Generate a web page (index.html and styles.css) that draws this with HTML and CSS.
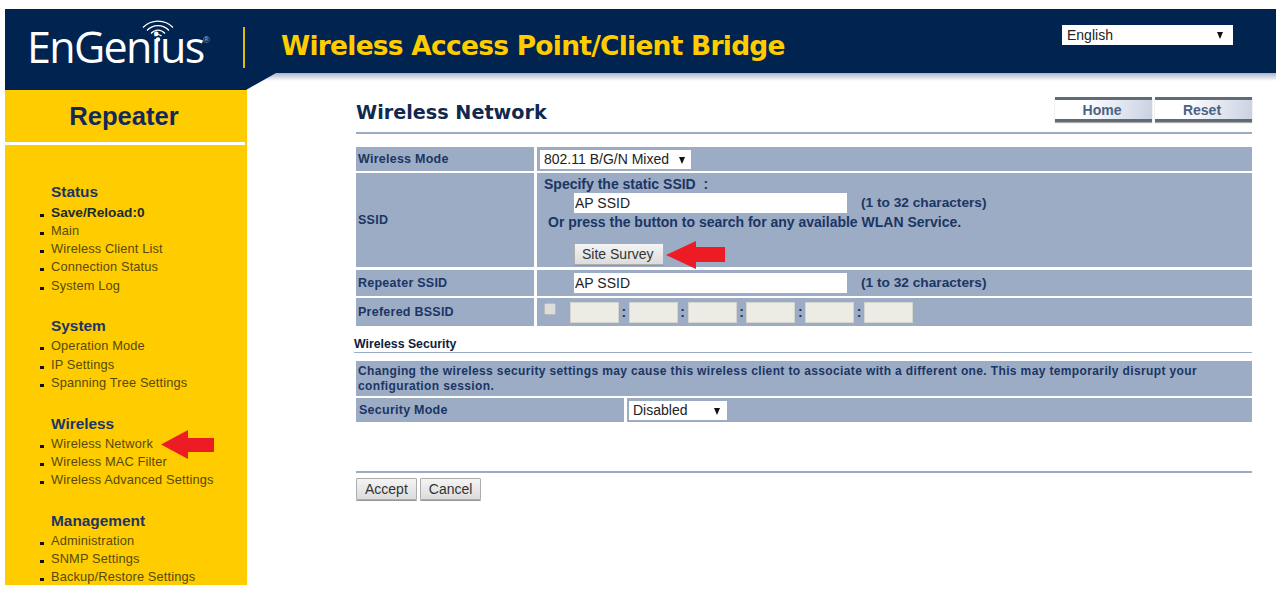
FILE: index.html
```html
<!DOCTYPE html>
<html>
<head>
<meta charset="utf-8">
<title>Wireless Network</title>
<link rel="stylesheet" href="styles.css">
</head>
<body>

<div id="header">
    <div class="logo">
        <span class="logo-text">EnGenius</span><span class="logo-reg">&reg;</span>
        <svg class="logo-wifi" width="34" height="24" viewBox="0 0 34 24" fill="none" stroke="#fff">
            <path d="M2 9.5C10 1 24 1 32 9.5" stroke-width="1.2"/>
            <path d="M6 12.5C12 6 22 6 28 12.5" stroke-width="1.2"/>
            <path d="M10 15.5C14 11 20 11 24 15.5" stroke-width="1.2"/>
            <path d="M13.5 18C15.5 16 18.5 16 20.5 18" stroke-width="1.2"/>
            <circle cx="17" cy="21.5" r="2.2" fill="#fff" stroke="none"/>
        </svg>
    </div>
    <div class="logo-divider"></div>
    <div class="product-name">Wireless Access Point/Client Bridge</div>
    <div class="select-wrap lang-select">
        <select><option>English</option></select>
    </div>
</div>

<div id="body-row">
    <div id="sidebar">
        <div class="notch"></div>
        <div class="mode-title">Repeater</div>
        <div class="menu">
            <div class="menu-group">
                <h3>Status</h3>
                <ul>
                    <li class="save">Save/Reload:0</li>
                    <li>Main</li>
                    <li>Wireless Client List</li>
                    <li>Connection Status</li>
                    <li>System Log</li>
                </ul>
            </div>
            <div class="menu-group">
                <h3>System</h3>
                <ul>
                    <li>Operation Mode</li>
                    <li>IP Settings</li>
                    <li>Spanning Tree Settings</li>
                </ul>
            </div>
            <div class="menu-group">
                <h3>Wireless</h3>
                <ul>
                    <li class="has-arrow">Wireless Network
                        <svg class="arrow arrow-menu" width="54" height="29" viewBox="0 0 54 29"><path d="M0 14.5L27 0V8H53V22H27V29Z" fill="#ed1c24"/></svg>
                    </li>
                    <li>Wireless MAC Filter</li>
                    <li>Wireless Advanced Settings</li>
                </ul>
            </div>
            <div class="menu-group">
                <h3>Management</h3>
                <ul>
                    <li>Administration</li>
                    <li>SNMP Settings</li>
                    <li>Backup/Restore Settings</li>
                </ul>
            </div>
        </div>
    </div>

    <div id="main">
        <div class="page-head">
            <h1>Wireless Network</h1>
            <div class="head-buttons">
                <a class="head-btn">Home</a>
                <a class="head-btn">Reset</a>
            </div>
        </div>

        <div class="form-row row-mode">
            <div class="label">Wireless Mode</div>
            <div class="value">
                <div class="select-wrap mode-select">
                    <select><option>802.11 B/G/N Mixed</option></select>
                </div>
            </div>
        </div>

        <div class="form-row row-ssid">
            <div class="label">SSID</div>
            <div class="value ssid-cell">
                <div class="ssid-line1">Specify the static SSID &nbsp;:</div>
                <div class="input-line">
                    <input class="text-input" type="text" value="AP SSID">
                    <span>(1 to 32 characters)</span>
                </div>
                <div class="ssid-line2">Or press the button to search for any available WLAN Service.</div>
                <div class="survey-line">
                    <button class="btn survey-btn">Site Survey</button>
                    <svg class="arrow arrow-survey" width="60" height="28" viewBox="0 0 60 28"><path d="M0 14L30 0V6H59V21H30V28Z" fill="#ed1c24"/></svg>
                </div>
            </div>
        </div>

        <div class="form-row row-repeater">
            <div class="label">Repeater SSID</div>
            <div class="value">
                <div class="input-line">
                    <input class="text-input" type="text" value="AP SSID">
                    <span>(1 to 32 characters)</span>
                </div>
            </div>
        </div>

        <div class="form-row row-bssid">
            <div class="label">Prefered BSSID</div>
            <div class="value bssid-cell">
                <span class="check"></span>
                <span class="mac"></span><b>:</b>
                <span class="mac"></span><b>:</b>
                <span class="mac"></span><b>:</b>
                <span class="mac"></span><b>:</b>
                <span class="mac"></span><b>:</b>
                <span class="mac"></span>
            </div>
        </div>

        <h2>Wireless Security</h2>

        <div class="notice">Changing the wireless security settings may cause this wireless client to associate with a different one. This may temporarily disrupt your configuration session.</div>

        <div class="form-row row-security">
            <div class="label">Security Mode</div>
            <div class="value">
                <div class="select-wrap security-select">
                    <select><option>Disabled</option></select>
                </div>
            </div>
        </div>

        <div class="form-actions">
            <button class="btn">Accept</button>
            <button class="btn">Cancel</button>
        </div>
    </div>
</div>

</body>
</html>
```

FILE: styles.css
```css
html, body {
    height: 100%;
    overflow: hidden;
}

body {
    background: #fff;
    margin: 0;
    padding: 9px 10px 0 5px;
    box-sizing: border-box;
    font-family: "Liberation Sans", Arial, sans-serif;
    font-size: 12px;
    color: #1b3564;
}

/* header */

#header {
    display: flex;
    align-items: flex-start;
    height: 64px;
    background: #00234f;
    position: relative;
}

.logo {
    width: 200px;
    height: 64px;
    margin-left: 25px;
    position: relative;
    color: #fff;
}

.logo-text {
    display: block;
    margin-left: -3px;
    font-family: "Open Sans", sans-serif;
    font-weight: 400;
    font-size: 43px;
    line-height: 64px;
    padding-top: 6px;
    letter-spacing: -1.65px;
    height: 58px;
}

.logo-reg {
    position: absolute;
    left: 173px;
    top: 26px;
    font-size: 9px;
    color: #aab3c0;
}

.logo-wifi {
    position: absolute;
    left: 111px;
    top: 9px;
}

.logo-divider {
    width: 2px;
    height: 41px;
    margin: 18px 0 0 13px;
    background: #e4b80c;
}

.product-name {
    margin: 19px 0 0 36px;
    font-family: "DejaVu Sans", Verdana, sans-serif;
    font-weight: bold;
    font-size: 26.5px;
    line-height: 36px;
    letter-spacing: -0.76px;
    color: #ffcc00;
    white-space: nowrap;
}

.select-wrap {
    position: relative;
    display: block;
    background: #fff;
}

.select-wrap::after {
    content: "";
    position: absolute;
    top: 50%;
    margin-top: -3px;
    border-left: 3.5px solid transparent;
    border-right: 3.5px solid transparent;
    border-top: 7px solid #111;
}

.select-wrap select {
    appearance: none;
    display: block;
    width: 100%;
    height: 100%;
    border: 0;
    background: transparent;
    color: #222;
    font-family: "Liberation Sans", Arial, sans-serif;
    font-size: 14px;
    padding: 0 0 2px 4px;
}

.lang-select {
    position: absolute;
    left: 1057px;
    top: 16px;
    width: 171px;
    height: 20px;
}

.lang-select select {
    padding: 0 0 0 5px;
}

.lang-select::after {
    right: 10px;
}

/* sidebar */

#body-row {
    display: flex;
    align-items: flex-start;
}

#sidebar {
    width: 242px;
    flex: none;
    height: 512px;
}

.notch {
    width: 271px;
    height: 17px;
    background: #00234f;
    clip-path: polygon(0 0, 100% 0, 241px 100%, 0 100%);
    position: relative;
    z-index: 1;
}

.mode-title {
    background: #ffcc00;
    height: 52px;
    line-height: 52px;
    text-align: center;
    font-size: 25.6px;
    font-weight: bold;
    color: #13295a;
    border-bottom: 3px solid #fff;
    margin-right: 2px;
    padding-right: 2px;
    box-sizing: content-box;
    box-shadow: 2px 0 0 #ffcc00;
}

.menu {
    background: #ffcc00;
    height: 440px;
    overflow: hidden;
    padding: 38px 0 0 46px;
    box-sizing: border-box;
}

.menu-group {
    margin-bottom: 22.6px;
}

.menu-group h3 {
    margin: 0 0 2px;
    font-size: 15.4px;
    line-height: 18px;
    font-weight: bold;
    color: #1b3564;
}

.menu-group ul {
    list-style: none;
    margin: 0;
    padding: 0;
}

.menu-group li {
    position: relative;
    font-size: 12.8px;
    line-height: 18.2px;
    color: #554a0c;
    letter-spacing: 0.15px;
}

.menu-group li::before {
    content: "";
    position: absolute;
    left: -11px;
    top: 10px;
    width: 4px;
    height: 3px;
    background: #111;
}

.menu-group li.save {
    font-weight: bold;
    font-size: 13.7px;
    line-height: 19px;
    color: #1d2a30;
    letter-spacing: 0;
}

.menu-group li.save::before {
    top: 11px;
}

.arrow {
    position: absolute;
}

.arrow-menu {
    left: 110px;
    top: -5px;
}

/* main area */

#main {
    flex: 1;
    height: 512px;
    padding: 0 24px 0 109px;
    background: linear-gradient(#aab3c8, #fff 8px) no-repeat;
    box-sizing: border-box;
}

.page-head {
    display: flex;
    justify-content: space-between;
    height: 59px;
    border-bottom: 2px solid #9cacc4;
    margin-bottom: 13px;
}

.page-head h1 {
    margin: 28px 0 0;
    font-family: "DejaVu Sans", Verdana, sans-serif;
    font-size: 19.2px;
    line-height: 24px;
    font-weight: bold;
    color: #12294f;
}

.head-buttons {
    display: flex;
    gap: 3px;
    margin-top: 24px;
}

.head-btn {
    display: block;
    width: 97px;
    height: 19px;
    border-top: 3px solid #5f6b77;
    border-bottom: 3px solid #5f6b77;
    background: linear-gradient(100deg, #fff 30%, #c9d1e1);
    box-shadow: 0 1px 1px #aaa;
    text-align: center;
    text-indent: -3px;
    font-size: 14px;
    font-weight: bold;
    line-height: 20px;
    color: #4c6286;
}

.form-row {
    display: grid;
    grid-template-columns: 178px 1fr;
    column-gap: 3px;
    margin-bottom: 2px;
}

.label, .value, .notice {
    background: #9cacc4;
    font-weight: bold;
    letter-spacing: 0.37px;
}

.label {
    display: flex;
    align-items: center;
    padding-left: 2px;
    font-size: 12.5px;
    letter-spacing: 0.25px;
}

.row-mode { height: 24px; }
.row-ssid { height: 94px; margin-bottom: 3px; }
.row-repeater { height: 26px; }
.row-bssid { height: 28px; }

.row-mode .value {
    padding: 3px 0 0 3px;
}

.mode-select {
    width: 151px;
    height: 19px;
}

.mode-select::after {
    right: 6px;
}

.value {
    font-size: 14px;
    letter-spacing: 0;
}

.ssid-line1 {
    padding: 3px 0 0 7px;
    line-height: 17px;
}

.input-line {
    display: flex;
    align-items: center;
    padding-left: 37px;
    line-height: 20px;
}

.input-line span {
    margin-left: 14px;
    font-size: 13.7px;
}

.text-input {
    width: 273px;
    height: 20px;
    box-sizing: border-box;
    border: 0;
    background: #fff;
    padding: 0 1px;
    font-family: "Liberation Sans", Arial, sans-serif;
    font-size: 14px;
    color: #222;
}

.ssid-line2 {
    padding: 0 0 0 11px;
    line-height: 19px;
}

.survey-line {
    position: relative;
    padding: 11px 0 0 37px;
}

.btn {
    height: 22px;
    padding: 0 8px;
    border: 1px solid #adadad;
    border-radius: 1px;
    background: linear-gradient(#f4f4f4, #dcdcdc);
    box-shadow: 0 1px 0 #999;
    font-family: "Liberation Sans", Arial, sans-serif;
    font-size: 14px;
    color: #333;
}

.survey-btn {
    padding: 0 9px 0 7px;
}

.arrow-survey {
    left: 129px;
    top: 9px;
}

.row-repeater .input-line {
    padding-top: 3px;
}

.bssid-cell {
    display: flex;
    align-items: center;
    padding-left: 7px;
}

.check {
    width: 12px;
    height: 12px;
    margin: -6px 14px 0 0;
    background: #ddd;
    border: 1px solid #bbb;
    border-radius: 2px;
    box-sizing: border-box;
}

.mac {
    width: 49px;
    height: 21px;
    background: #ecebe4;
    border: 1px solid #d5d5d0;
    box-sizing: border-box;
}

.bssid-cell b {
    width: 9.8px;
    text-align: center;
}

#main h2 {
    margin: 10px 0 0 -2px;
    height: 16px;
    border-bottom: 1px solid #9cacc4;
    font-size: 12.3px;
    line-height: 16px;
    font-weight: bold;
    color: #10213a;
}

.notice {
    margin-top: 8px;
    padding: 3px 2px 0;
    height: 35px;
    box-sizing: border-box;
    line-height: 15px;
    margin-bottom: 2px;
}

.row-security {
    grid-template-columns: 268px 1fr;
    height: 24px;
}

.row-security .label {
    padding-left: 3px;
}

.row-security .value {
    padding: 3px 0 0 2px;
}

.security-select {
    width: 98px;
    height: 19px;
}

.security-select::after {
    right: 7px;
}

.form-actions {
    margin-top: 49px;
    padding-top: 5px;
    border-top: 2px solid #9cacc4;
    display: flex;
    gap: 3px;
}
```
